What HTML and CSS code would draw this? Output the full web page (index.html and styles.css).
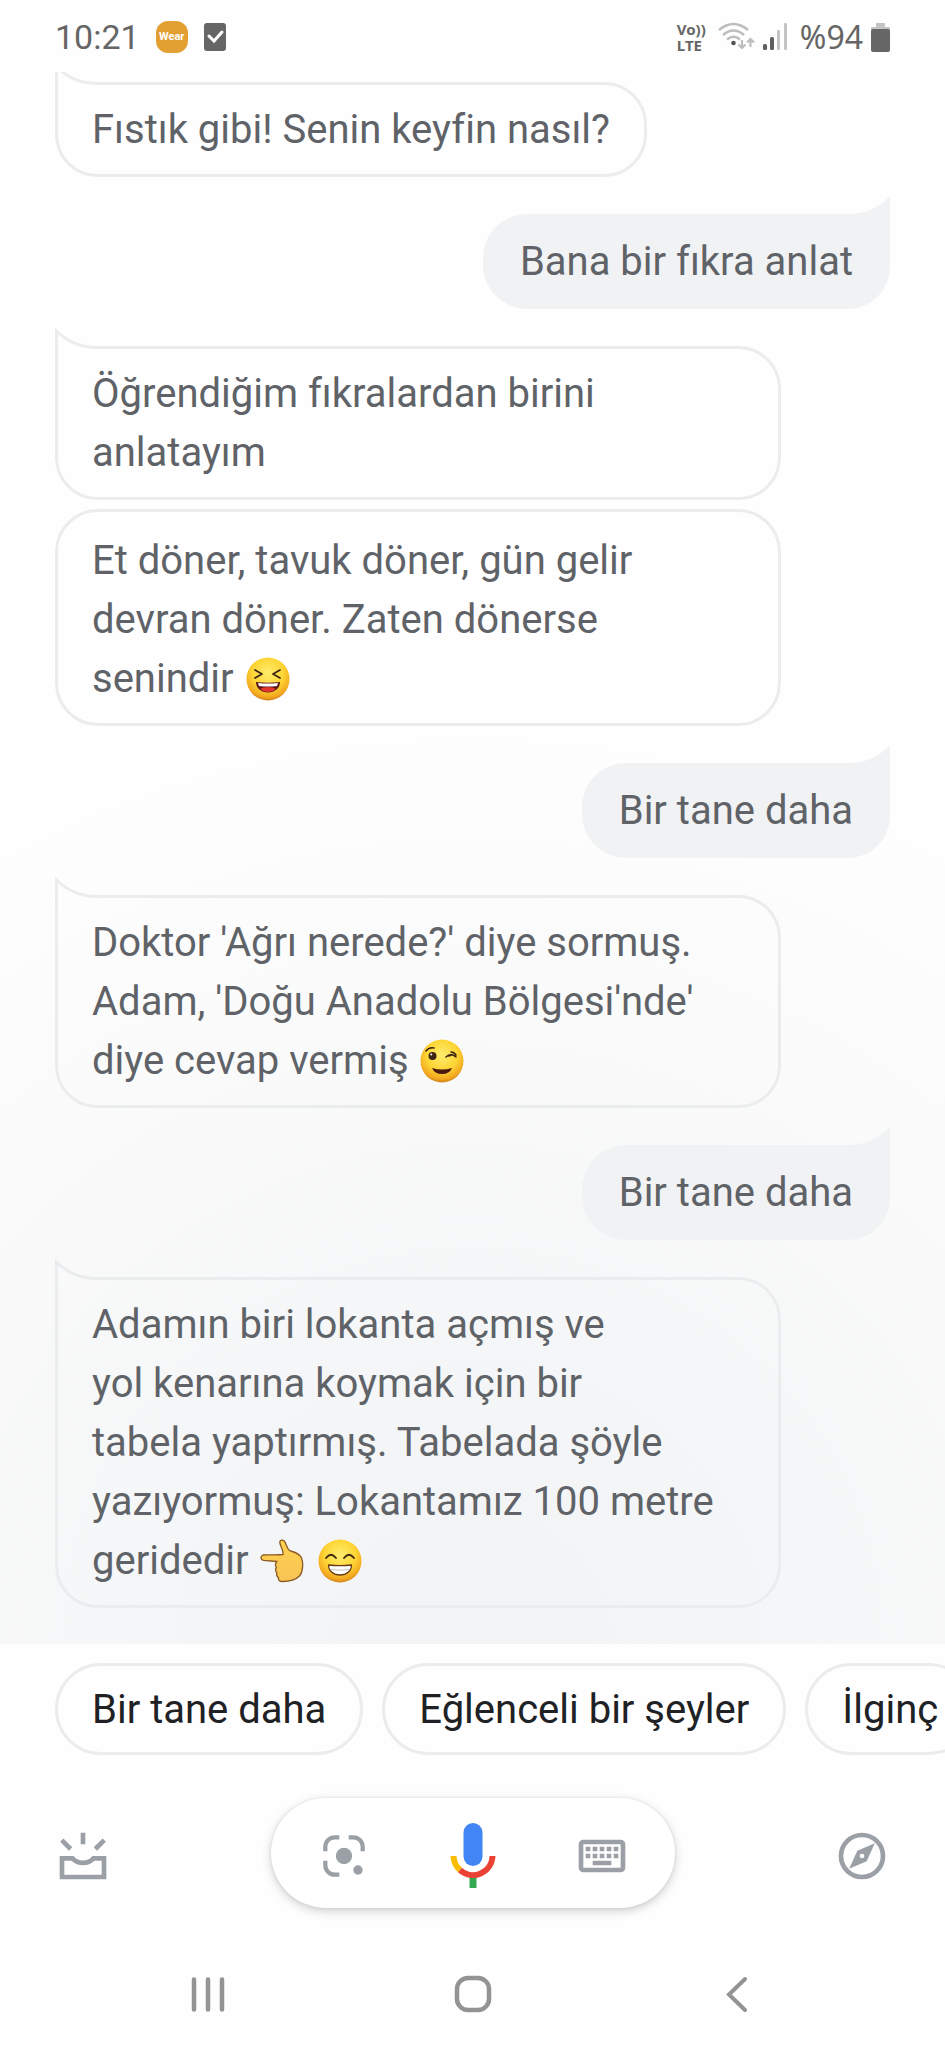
FILE: index.html
```html
<!DOCTYPE html>
<html lang="tr">
<head>
  <meta charset="UTF-8" />
  <meta name="viewport" content="width=device-width, initial-scale=1.0" />
  <title>Asistan</title>
  <link rel="stylesheet" href="styles.css">
</head>
<body>
  <!-- shared emoji parts -->
  <svg class="defs" width="0" height="0" aria-hidden="true">
    <defs>
      <radialGradient id="face" cx="50%" cy="36%" r="66%">
        <stop offset="0" stop-color="#ffec6e" />
        <stop offset="0.55" stop-color="#fdd534" />
        <stop offset="0.85" stop-color="#f3a81f" />
        <stop offset="1" stop-color="#c9781a" />
      </radialGradient>
      <linearGradient id="skin" x1="0" y1="0" x2="0" y2="1">
        <stop offset="0" stop-color="#ffd24f" />
        <stop offset="1" stop-color="#f8c355" />
      </linearGradient>
    </defs>
  </svg>

  <header class="status-bar">
    <div class="status-side status-left">
      <span class="time">10:21</span>
      <span class="wear">Wear</span>
      <svg width="22" height="28" viewBox="0 0 22 28">
        <rect width="22" height="28" rx="3" fill="#666" />
        <path d="M5 13l5 5 8-9" fill="none" stroke="#fff" stroke-width="3" stroke-linecap="round" />
      </svg>
    </div>
    <div class="status-side status-right">
      <span class="volte"><span>Vo))</span><span>LTE</span></span>
      <svg class="wifi" width="37" height="30" viewBox="0 0 37 30">
        <g fill="none" stroke="#bdbdbd" stroke-width="2.6">
          <path d="M1 8Q15.500-4 30 8" />
          <path d="M5 13Q15.500 4 26 13" />
          <path d="M9 17.500Q15.500 12 22 17.500" />
          <path d="M24 18v8M20.500 22.500L24 26l3.500-3.500M32.500 25v-8M29 20.500L32.500 17l3.500 3.500" stroke-width="2.200" />
        </g>
        <circle cx="15.500" cy="21" r="2.300" fill="#555" />
      </svg>
      <svg class="signal" width="25" height="28" viewBox="0 0 25 28">
        <rect x="0" y="21" width="4" height="6" rx="1.500" fill="#5f5f5f" />
        <rect x="7" y="14" width="4" height="13" rx="1.500" fill="#5f5f5f" />
        <rect x="14" y="7" width="3" height="20" rx="1" fill="#c4c4c4" />
        <rect x="21" y="0" width="3" height="27" rx="1" fill="#c4c4c4" />
      </svg>
      <span class="battery-text">%94</span>
      <svg width="19" height="29" viewBox="0 0 19 29">
        <rect x="5" y="0" width="9" height="6" rx="1" fill="#c4c4c4" />
        <rect x="0" y="4" width="19" height="3" rx="1" fill="#c4c4c4" />
        <rect x="0" y="6" width="19" height="23" rx="2" fill="#666" />
      </svg>
    </div>
  </header>

  <main class="chat">
    <div class="bubble bot tail">Fıstık gibi! Senin keyfin nasıl?</div>
    <div class="bubble user">Bana bir fıkra anlat</div>
    <div class="group">
      <div class="bubble bot tail wide">Öğrendiğim fıkralardan birini<br>anlatayım</div>
      <div class="bubble bot next wide">Et döner, tavuk döner, gün gelir<br>devran döner. Zaten dönerse<br>senindir
        <svg class="emoji" viewBox="0 0 44 44" role="img" aria-label="gülen yüz">
          <circle cx="22" cy="22" r="21.500" fill="url(#face)" />
          <path d="M9 13l7 4-7 4M34 13l-7 4 7 4" fill="none" stroke="#3b2412" stroke-width="1.700" stroke-linecap="round" stroke-linejoin="round" />
          <path d="M10 25q12 1.500 24 0c0 6-5 10.500-12 10.500S10 31 10 25z" fill="#5c1713" />
          <path d="M12 26q10 1.200 20 0l-1 3q-9 1-18 0z" fill="#fff" />
          <path d="M14 32q8-4 16 0-3 3-8 3t-8-3z" fill="#e0342c" />
        </svg>
      </div>
    </div>
    <div class="bubble user">Bir tane daha</div>
    <div class="bubble bot tail wide">Doktor 'Ağrı nerede?' diye sormuş.<br>Adam, 'Doğu Anadolu Bölgesi'nde'<br>diye cevap vermiş
      <svg class="emoji" viewBox="0 0 44 44" role="img" aria-label="göz kırpan yüz">
        <circle cx="22" cy="22" r="21.500" fill="url(#face)" />
        <circle cx="12.500" cy="17" r="4" fill="#3b2412" />
        <circle cx="11.300" cy="15.500" r="1" fill="#fff" />
        <path d="M6 12q3-4 8-3M31 13q3 0 5 3M26 18q5-4.500 10 0M29 17l3-1.500" fill="none" stroke="#3b2412" stroke-width="1.600" stroke-linecap="round" />
        <path d="M12 29q10 3 20 0-2.500 6-10 6t-10-6z" fill="#4a1a10" />
      </svg>
    </div>
    <div class="bubble user">Bir tane daha</div>
    <div class="bubble bot tail wide">Adamın biri lokanta açmış ve<br>yol kenarına koymak için bir<br>tabela yaptırmış. Tabelada şöyle<br>yazıyormuş: Lokantamız 100 metre<br>geridedir
      <svg class="emoji" viewBox="0 0 44 44" role="img" aria-label="sola işaret eden el">
        <path d="M3 16c-3 1-2.500 5 .5 5.400L17 22.500c-2 2-2 4-.5 6-1.500 1.500-1 4 .5 5.500-1 2 0 4 1.500 4.500-.5 2.500 1 4 4 4 8 0 13-1.500 17-5.500 3.500-4 4-13 2-18-1.500-3.500-7-6-11-7-3-1-4-6-5.500-9-1.500-3-6-2.500-5 1.500 1 4 3.500 7 3 11-6 1-14 0-20 .5z" fill="url(#skin)" stroke="#8a5a22" stroke-width="1.300" stroke-linejoin="round" />
      </svg>
      <svg class="emoji" viewBox="0 0 44 44" role="img" aria-label="sırıtan yüz">
        <circle cx="22" cy="22" r="21.500" fill="url(#face)" />
        <path d="M8 19q5-6.500 10 0M26 19q5-6.500 10 0" fill="none" stroke="#3b2412" stroke-width="1.800" stroke-linecap="round" />
        <path d="M10.500 26q11.500 1.300 23 0c0 6-5 10-11.500 10s-11.500-4-11.500-10z" fill="#fff" stroke="#6b3a14" stroke-width="1.300" />
        <path d="M12 30.500q10 1.300 20 0" stroke="#b9b2ab" stroke-width="0.800" fill="none" />
      </svg>
    </div>
  </main>

  <div class="chips">
    <button class="chip" type="button">Bir tane daha</button>
    <button class="chip" type="button">Eğlenceli bir şeyler</button>
    <button class="chip" type="button">İlginç</button>
  </div>

  <div class="action-bar">
    <button class="icon-btn" type="button" aria-label="Özet">
      <svg width="56" height="56" viewBox="0 0 24 24" fill="none" stroke="#9aa0a6" stroke-width="2">
        <path d="M3 13h4.500c2.300 2.600 6.700 2.600 9 0H21v8H3z" />
        <path d="M12 2v5M2.900 5.200l3.800 3.800M21.100 5.200L17.300 9" />
      </svg>
    </button>
    <div class="mic-pill">
      <button class="icon-btn" type="button" aria-label="Lens">
        <svg width="56" height="56" viewBox="0 0 24 24" fill="none" stroke="#9aa0a6" stroke-width="1.800">
          <path d="M4 10V8a4 4 0 0 1 4-4h2M14 4h2a4 4 0 0 1 4 4v2M4 14v2a4 4 0 0 0 4 4h2" />
          <circle cx="12" cy="12" r="3.500" fill="#9aa0a6" stroke="none" />
          <circle cx="18" cy="18" r="2" fill="#9aa0a6" stroke="none" />
        </svg>
      </button>
      <button class="icon-btn" type="button" aria-label="Mikrofon">
        <svg width="56" height="66" viewBox="0 0 56 66" fill="none" stroke-width="6">
          <rect x="18.500" y="0" width="19" height="43" rx="9.500" fill="#4285f4" />
          <path d="M28 54v11" stroke="#34a853" stroke-width="7" />
          <path d="M8.500 33A19.500 19.500 0 0 0 15 47" stroke="#fbbc04" />
          <path d="M15 47A19.500 19.500 0 0 0 47.500 33" stroke="#ea4335" />
        </svg>
      </button>
      <button class="icon-btn" type="button" aria-label="Klavye">
        <svg width="56" height="56" viewBox="0 0 24 24" fill="#9aa0a6">
          <rect x="3" y="6" width="18" height="12" rx="1" fill="none" stroke="#9aa0a6" stroke-width="2" />
          <path d="M5 8h2v2H5zM8 8h2v2H8zM11 8h2v2h-2zM14 8h2v2h-2zM17 8h2v2h-2zM5 11h2v2H5zM8 11h2v2H8zM11 11h2v2h-2zM14 11h2v2h-2zM17 11h2v2h-2zM8 14h8v2H8z" />
        </svg>
      </button>
    </div>
    <button class="icon-btn" type="button" aria-label="Keşfet">
      <svg width="56" height="56" viewBox="0 0 24 24" fill="#9aa0a6">
        <circle cx="12" cy="12" r="9" fill="none" stroke="#9aa0a6" stroke-width="2" />
        <path fill-rule="evenodd" d="M17.500 6.500L14 14.200 6.500 17.500 10 9.800zM12 11a1 1 0 1 0 0 2 1 1 0 0 0 0-2z" />
      </svg>
    </button>
  </div>

  <nav class="nav-bar">
    <button class="nav-btn" type="button" aria-label="Son uygulamalar">
      <svg width="40" height="40" viewBox="0 0 40 40" stroke="#939393" stroke-width="4.500" stroke-linecap="round">
        <path d="M6 5.500v30M20 5.500v30M34 5.500v30" />
      </svg>
    </button>
    <button class="nav-btn" type="button" aria-label="Ana ekran">
      <svg width="40" height="40" viewBox="0 0 40 40" fill="none" stroke="#939393" stroke-width="4.500">
        <rect x="4" y="4" width="32" height="32" rx="11" />
      </svg>
    </button>
    <button class="nav-btn" type="button" aria-label="Geri">
      <svg width="40" height="40" viewBox="0 0 40 40" fill="none" stroke="#939393" stroke-width="4" stroke-linecap="round">
        <path d="M28 5L12 20.500 28 36" />
      </svg>
    </button>
  </nav>
</body>
</html>
```

FILE: styles.css
```css
* {
  box-sizing: border-box;
}

body {
  margin: 0;
  min-height: 100vh;
  display: flex;
  flex-direction: column;
  background: #fefefe;
  color: #5f6368;
  font-family: Roboto, sans-serif;
  font-size: 40px;
  overflow-x: hidden;
}

button {
  font: inherit;
  border: none;
  background: none;
  padding: 0;
  cursor: pointer;
}

svg {
  display: block;
}

.defs {
  position: absolute;
}

/* status bar */
.status-bar {
  height: 72px;
  padding: 2px 55px 0;
  display: flex;
  align-items: center;
  justify-content: space-between;
  color: #666;
  font-size: 34px;
}

.status-side {
  display: flex;
  align-items: center;
}

.status-left {
  gap: 16px;
}

.status-right {
  gap: 8px;
}

.wear {
  width: 32px;
  height: 32px;
  border-radius: 12px;
  background: #e2a033;
  color: #fff;
  font-size: 11px;
  font-weight: bold;
  line-height: 32px;
  text-align: center;
}

.volte {
  display: flex;
  flex-direction: column;
  font: bold 15px/16px "Noto Sans", sans-serif;
}

.wifi {
  margin-left: 4px;
}

.battery-text {
  margin-left: 4px;
  font-family: "Noto Sans", sans-serif;
  font-size: 32px;
  line-height: 40px;
}

/* conversation */
.chat {
  flex: 1;
  padding: 10px 55px 35px;
  display: flex;
  flex-direction: column;
  align-items: flex-start;
  gap: 37px;
  overflow: hidden;
  background: radial-gradient(ellipse 100% 58% at 50% 100%, #f2f3f4, #f5f6f7 35%, #fefefe);
}

.group {
  width: 100%;
  display: flex;
  flex-direction: column;
  gap: 9px;
}

.bubble {
  padding: 15px 34px;
  border: 3px solid #ebecee;
  line-height: 59px;
}

.wide {
  width: 87%;
}

/* outlined bubble with its tail on the top left */
.tail {
  border-image-source: url("data:image/svg+xml,%3Csvg xmlns='http://www.w3.org/2000/svg' width='120' height='140'%3E%3Cpath d='M1.500 3A58 58 0 0 0 43 19.500H78A41 41 0 0 1 118.500 60V98A41 41 0 0 1 78 138.500H42A41 41 0 0 1 1.500 98Z' fill='none' stroke='%23ebecee' stroke-width='3'/%3E%3C/svg%3E");
  border-image-slice: 61 43 43 44;
  border-image-width: 61px 43px 43px 44px;
  border-image-outset: 18px 0 0;
}

.next {
  padding-top: 19px;
  border-radius: 43px;
}

/* filled bubble with its tail on the top right */
.user {
  align-self: flex-end;
  border-image-source: url("data:image/svg+xml,%3Csvg xmlns='http://www.w3.org/2000/svg' width='120' height='140'%3E%3Cpath d='M120 0A58 58 0 0 1 77 18H44A44 44 0 0 0 0 62V96A44 44 0 0 0 44 140H78A42 42 0 0 0 120 98Z' fill='%23f1f2f4'/%3E%3C/svg%3E");
  border-image-slice: 62 44 44 44 fill;
  border-image-width: 62px 44px 44px 44px;
  border-image-outset: 18px 0 0;
}

.emoji {
  display: inline-block;
  width: 44px;
  height: 44px;
  margin: 0 2px;
  vertical-align: -9px;
}

/* suggestions */
.chips {
  padding: 19px 0 0 55px;
  display: flex;
  gap: 19px;
  overflow: hidden;
}

.chip {
  flex-shrink: 0;
  height: 92px;
  padding: 0 34px;
  border: 3px solid #ebecee;
  border-radius: 46px;
  color: #202124;
  white-space: nowrap;
}

/* bottom controls */
.action-bar {
  padding: 43px 55px 0;
  display: flex;
  align-items: flex-end;
  justify-content: space-between;
}

.mic-pill {
  width: 404px;
  height: 110px;
  padding: 0 45px;
  display: flex;
  align-items: flex-end;
  justify-content: space-between;
  border-radius: 55px;
  background: #fff;
  box-shadow: 0 3px 10px rgba(60, 64, 67, 0.25), 0 0 3px rgba(60, 64, 67, 0.1);
}

.icon-btn {
  height: 104px;
  display: flex;
  align-items: center;
}

.nav-bar {
  padding: 56px 0 24px;
  display: grid;
  grid-template-columns: repeat(3, 28%);
  justify-content: center;
}

.nav-btn {
  height: 60px;
  display: flex;
  align-items: center;
  justify-content: center;
}
```
